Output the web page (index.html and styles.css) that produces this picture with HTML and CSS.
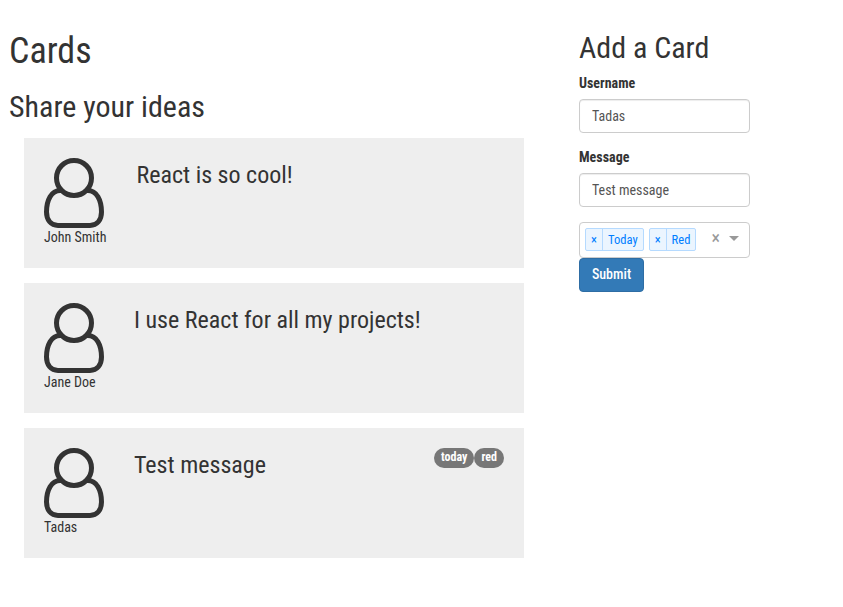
FILE: index.html
```html
<!DOCTYPE html>
<html lang="en">
<head>
<meta charset="utf-8">
<title>Cards</title>
<link rel="stylesheet" href="styles.css">
</head>
<body>
<svg class="defs" width="0" height="0">
  <symbol id="user" viewBox="0 0 60 70">
    <path d="M17.500 32.500C7 31.500 2.500 43 2.500 54C2.500 62 7 67.500 14 67.500H46C53 67.500 57.500 62 57.500 54C57.500 43 53 31.500 42.500 32.500"/>
    <circle cx="30" cy="20" r="17.500"/>
  </symbol>
</svg>
<main class="page">
  <section class="list">
    <h1>Cards</h1>
    <h2>Share your ideas</h2>
    <article class="card">
      <div class="user"><svg class="avatar"><use href="#user"/></svg><span class="name">John Smith</span></div>
      <h3 class="message">React is so cool!</h3>
    </article>
    <article class="card">
      <div class="user"><svg class="avatar"><use href="#user"/></svg><span class="name">Jane Doe</span></div>
      <h3 class="message">I use React for all my projects!</h3>
    </article>
    <article class="card">
      <div class="user"><svg class="avatar"><use href="#user"/></svg><span class="name">Tadas</span></div>
      <h3 class="message">Test message</h3>
      <div class="badges"><span class="badge">today</span><span class="badge">red</span></div>
    </article>
  </section>
  <form class="form">
    <h2>Add a Card</h2>
    <label for="username">Username</label>
    <input id="username" type="text" value="Tadas">
    <label for="message">Message</label>
    <input id="message" type="text" value="Test message">
    <div class="select">
      <span class="tag"><span class="remove">×</span><span class="value">Today</span></span>
      <span class="tag"><span class="remove">×</span><span class="value">Red</span></span>
      <span class="clear">×</span>
      <span class="arrow"></span>
    </div>
    <button class="submit" type="button">Submit</button>
  </form>
</main>
</body>
</html>
```
FILE: styles.css
```css
* { box-sizing: border-box; }
body {
  margin: 0;
  color: #333;
  background: #fff;
  font: 14px/20px "Roboto Condensed", Roboto, sans-serif;
  font-stretch: 75%;
}
.defs { display: block; }
.page { display: flex; padding-left: 9px; }
.list { width: 515px; margin-right: 55px; }
h1, h2, h3 { font-weight: 400; line-height: 1.1; margin: 0; }
h1 { font-size: 36px; line-height: 40px; padding-top: 31px; padding-bottom: 1px; }
h2 { font-size: 30px; margin: 18px 0 15px; }
.card {
  display: flex;
  height: 130px;
  margin: 0 0 15px 15px;
  padding: 20px;
  background: #eee;
}
.user { display: flex; flex-direction: column; }
.avatar { width: 60px; height: 70px; fill: none; stroke: #333; stroke-width: 5; }
.name { line-height: 18px; }
.message { font-size: 24px; margin: 4px 0 0 30px; }
.badges { display: flex; margin-left: auto; }
.badge {
  height: 20px;
  padding: 3px 7px;
  border-radius: 10px;
  background: #777;
  color: #fff;
  font-size: 12px;
  font-weight: 700;
  line-height: 12px;
}
.form { width: 171px; }
.form h2 { margin: 31px 0 9px; }
label { display: block; font-weight: 700; margin-bottom: 6px; }
input {
  display: block;
  width: 100%;
  height: 34px;
  margin-bottom: 14px;
  padding: 6px 12px;
  border: 1px solid #ccc;
  border-radius: 4px;
  box-shadow: inset 0 1px 1px rgba(0, 0, 0, .075);
  color: #555;
  font: inherit;
}
.select {
  display: flex;
  height: 36px;
  margin-top: 15px;
  padding: 5px;
  gap: 5px;
  border: 1px solid #ccc;
  border-radius: 4px;
}
.tag {
  display: flex;
  height: 23px;
  border: 1px solid #b5daff;
  border-radius: 2px;
  background: #ebf5ff;
  color: #007eff;
  font-size: 12.6px;
  line-height: 22px;
}
.remove { padding: 0 5px; border-right: 1px solid #b5daff; }
.value { padding: 0 5px; }
.clear { margin-left: auto; color: #999; font-size: 18px; line-height: 20px; }
.arrow {
  margin: 8px 5px 0 4px;
  width: 10px;
  height: 5px;
  border: 5px solid transparent;
  border-top-color: #999;
  border-bottom: 0;
}
.submit {
  height: 34px;
  padding: 5px 11px 7px;
  border: 1px solid #2e6da4;
  border-radius: 4px;
  background: #337ab7;
  color: #fff;
  font: inherit;
  font-weight: 500;
  width: 65px;
}
```
